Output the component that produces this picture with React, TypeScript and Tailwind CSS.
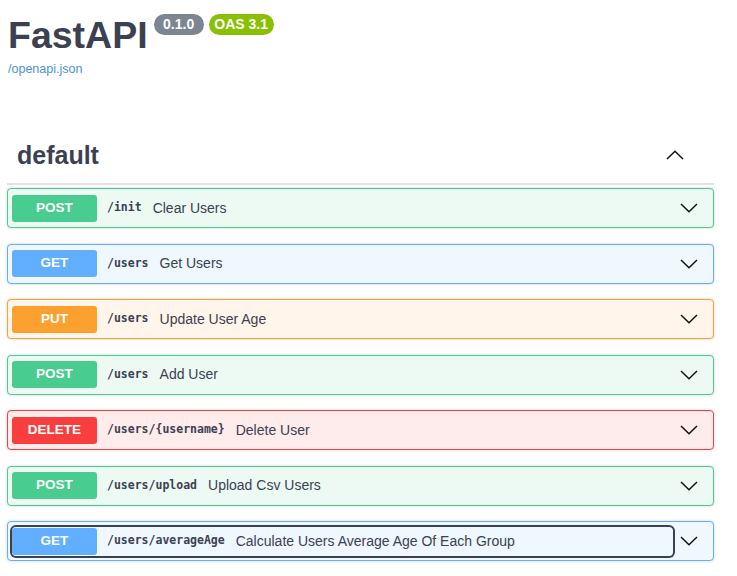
const ops = [
  { method: "POST", path: "/init", summary: "Clear Users" },
  { method: "GET", path: "/users", summary: "Get Users" },
  { method: "PUT", path: "/users", summary: "Update User Age" },
  { method: "POST", path: "/users", summary: "Add User" },
  { method: "DELETE", path: "/users/{username}", summary: "Delete User" },
  { method: "POST", path: "/users/upload", summary: "Upload Csv Users" },
  { method: "GET", path: "/users/averageAge", summary: "Calculate Users Average Age Of Each Group", focused: true },
];

const styles: Record<string, { block: string; badge: string }> = {
  POST: { block: "border-[#49cc90] bg-[#edfaf4]", badge: "bg-[#49cc90]" },
  GET: { block: "border-[#61affe] bg-[#eff7ff]", badge: "bg-[#61affe]" },
  PUT: { block: "border-[#fca130] bg-[#fff5ea]", badge: "bg-[#fca130]" },
  DELETE: { block: "border-[#f93e3e] bg-[#feebeb]", badge: "bg-[#f93e3e]" },
};

const Chevron = ({ up }: { up?: boolean }) => (
  <svg width="18" height="10" viewBox="0 0 18 10" fill="none" className="shrink-0">
    <path
      d={up ? "M1 9 L9 1.2 L17 9" : "M1 1 L9 8.8 L17 1"}
      stroke="#111"
      strokeWidth="1.5"
    />
  </svg>
);

const App = () => {
  return (
    <div className="min-h-screen bg-white font-['Liberation_Sans',Arial,sans-serif] text-[#3b4151]">
      <div className="pl-[7px] pr-[23px]">
        {/* info */}
        <div className="pt-[14px] pl-[1px]">
          <div className="flex items-start">
            <h2 className="mt-[3px] text-[37.5px] leading-[37px] font-bold">FastAPI</h2>
            <span className="ml-[6px] flex h-[21px] w-[50px] items-center justify-center rounded-full bg-[#7d8492] text-[14px] font-bold text-white">
              0.1.0
            </span>
            <span className="ml-[5px] flex h-[21px] w-[65px] items-center justify-center rounded-full bg-[#89bf04] text-[14px] font-bold text-white">
              OAS 3.1
            </span>
          </div>
          <a className="mt-[7px] block text-[12.5px] leading-[16px] text-[#4990e2]">/openapi.json</a>
        </div>

        {/* tag section */}
        <div className="mt-[53px] flex h-[50px] items-center justify-between pl-[10px] pr-[30px]">
          <h3 className="text-[25px] leading-[32px] font-bold">default</h3>
          <Chevron up />
        </div>
        <div className="mt-[3px] h-[2px] bg-[#dfe1e5]" />

        <div className="mt-[3px] flex flex-col gap-[15.5px]">
          {ops.map((op, i) => {
            const s = styles[op.method];
            return (
              <div
                key={i}
                className={`flex h-[40px] items-center rounded-[4px] border pl-[4px] pr-[15px] shadow-[0_0_3px_rgba(0,0,0,0.19)] ${s.block}`}
              >
                <div
                  className={`mr-[7px] flex h-[29px] flex-1 items-center rounded-[4px] ${
                    op.focused ? "ring-2 ring-[#3b4151]" : ""
                  }`}
                >
                  <span
                    className={`flex h-[27px] w-[85px] items-center justify-center rounded-[3px] text-[13.5px] font-bold text-white ${s.badge}`}
                  >
                    {op.method}
                  </span>
                  <span className="ml-[10px] mr-[11px] font-['DejaVu_Sans_Mono',monospace] text-[11.5px] font-bold text-[#3b4151]">
                    {op.path}
                  </span>
                  <span className="text-[14px] text-[#3b4151]">{op.summary}</span>
                </div>
                <Chevron />
              </div>
            );
          })}
        </div>
      </div>
    </div>
  );
};

export default App;
